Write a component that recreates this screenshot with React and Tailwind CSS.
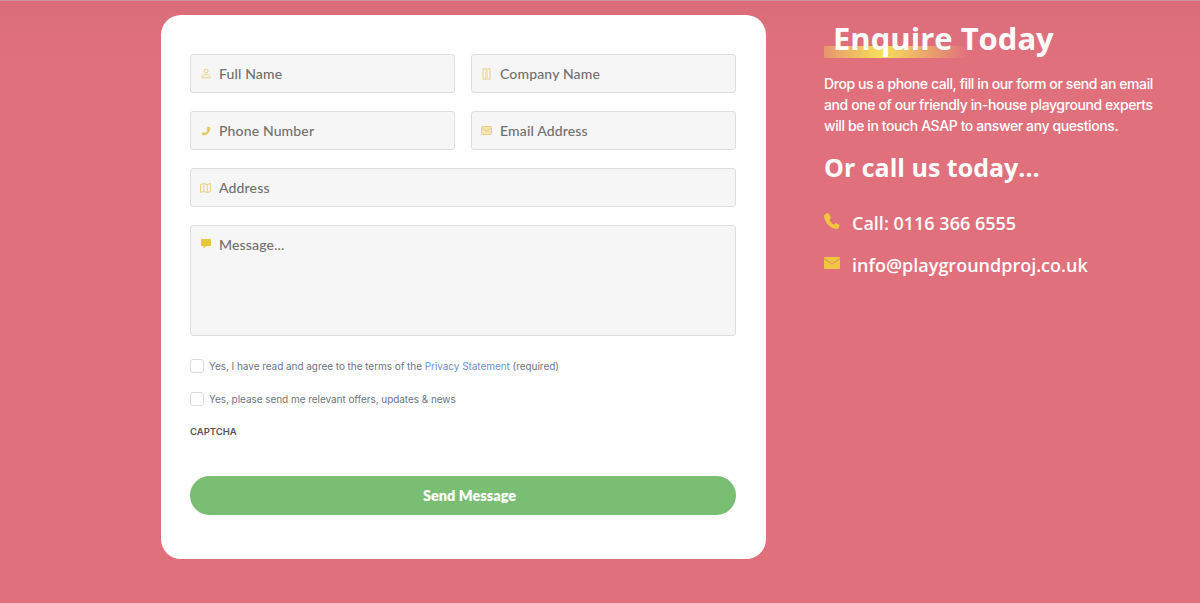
import React from 'react';

const UserIcon = () => (
  <svg width="10" height="11" viewBox="0 0 10 11" fill="none" stroke="#e8cf85" strokeWidth="1">
    <circle cx="5" cy="3" r="2" />
    <path d="M1 9.2c0-1.500 1.200-2.400 2.400-2.400h3.200c1.200 0 2.400.9 2.400 2.400v.6H1z" />
  </svg>
);

const BuildingIcon = () => (
  <svg width="9" height="12" viewBox="0 0 9 12" fill="none" stroke="#e8cf85" strokeWidth="1">
    <rect x="1" y="1" width="7" height="10" />
    <path d="M3 3h3M3 5h3M3 7h3M3 9h3" />
  </svg>
);

const PhoneSolid = ({ size, color, className }) => (
  <svg width={size} height={size} viewBox="0 0 16 16" fill={color} className={className}>
    <path d="M12.600 1.200l2 1.200c.4.200.5.600.5 1C14.600 9.800 9.600 14.700 3.400 15c-.4 0-.8-.2-1-.6l-1.100-2c-.2-.4-.1-.9.3-1.100l2.400-1.400c.4-.2.8-.1 1 .2l1 1.200c1.900-.9 3.500-2.600 4.400-4.500L9.300 5.700c-.3-.3-.4-.7-.2-1.100l1.400-2.900c.4-.5 1.500-.8 2.100-.5z" />
  </svg>
);

const MailOutline = () => (
  <svg width="11" height="9" viewBox="0 0 11 9" fill="#f3e3b4" stroke="#e8cf85" strokeWidth="1">
    <rect x="0.5" y="0.5" width="10" height="8" rx="1" />
    <path d="M0.500 2l5 3 5-3" fill="none" />
  </svg>
);

const MailSolid = () => (
  <svg width="16" height="12" viewBox="0 0 16 12" className="-translate-y-[2px]">
    <rect width="16" height="12" rx="1" fill="#efc63f" />
    <path d="M0 1.500l8 5.500 8-5.500" fill="none" stroke="#e1707d" strokeWidth="0.8" />
  </svg>
);

const MapIcon = () => (
  <svg width="11" height="10" viewBox="0 0 11 10" fill="none" stroke="#e8cf85" strokeWidth="1">
    <path d="M0.500 1.500l3.300-1 3.400 1 3.300-1v8l-3.300 1-3.400-1-3.300 1zM3.800.5v8M7.200 1.500v8" />
  </svg>
);

const ChatIcon = () => (
  <svg width="10" height="10" viewBox="0 0 10 10" fill="#e6c63c">
    <path d="M1 0h8c.6 0 1 .4 1 1v5c0 .6-.4 1-1 1H5L2.500 9.500V7H1c-.6 0-1-.4-1-1V1c0-.6.4-1 1-1z" />
  </svg>
);

const Field = ({ icon, label, iconBox = '', className = 'h-[39px] items-center' }) => (
  <div className={`flex flex-1 rounded-[3px] border border-[#dedede] bg-[#f6f6f6] pl-[9px] ${className}`}>
    <span className={`flex w-[11px] justify-center ${iconBox}`}>{icon}</span>
    <span className="ml-[8px] text-[14px] font-medium tracking-[0.15px] text-[#707070]">{label}</span>
  </div>
);

const CheckRow = ({ children, className }) => (
  <div className={`flex items-start ${className}`}>
    <span className="h-[14px] w-[14px] rounded-[3px] border border-[#dcdcdc] bg-white" />
    <span className="ml-[5px] text-[10px] leading-[14px] tracking-[-0.05px] text-[#6b7585]">{children}</span>
  </div>
);

export default function App() {
  return (
    <div className="flex h-[603px] w-[1200px] overflow-hidden border-t border-[#c9959c] bg-gradient-to-b from-[#da6c7a] via-[#e1707d] via-[10%] to-[#e1707d] pl-[161px] pt-[14px] [font-family:'Open_Sans',sans-serif]">
      {/* form card */}
      <div className="h-[544px] w-[605px] rounded-[20px] bg-white pl-[29px] pr-[30px] pt-[39px] [font-family:'Lato',sans-serif]">
        <div className="flex gap-[16px]">
          <Field icon={<UserIcon />} label="Full Name" />
          <Field icon={<BuildingIcon />} label="Company Name" />
        </div>
        <div className="mt-[18px] flex gap-[16px]">
          <Field icon={<PhoneSolid size={10} color="#e4c95e" />} label="Phone Number" />
          <Field icon={<MailOutline />} label="Email Address" />
        </div>
        <div className="mt-[18px] flex">
          <Field icon={<MapIcon />} label="Address" />
        </div>
        <div className="mt-[18px] flex">
          <Field
            icon={<ChatIcon />}
            label="Message..."
            iconBox="pt-[13px]"
            className="h-[111px] items-start [&>span:last-child]:mt-[8px]"
          />
        </div>

        <div className="[font-family:'Inter',sans-serif]">
          <CheckRow className="mt-[23px]">
            Yes, I have read and agree to the terms of the <span className="text-[#6f8fd6]">Privacy Statement</span> (required)
          </CheckRow>
          <CheckRow className="mt-[19px]">Yes, please send me relevant offers, updates &amp; news</CheckRow>
          <div className="mt-[19px] text-[9.500px] font-semibold leading-[14px] text-[#555]">CAPTCHA</div>
        </div>

        <button className="mt-[37px] h-[39px] w-full rounded-full bg-[#7abe74] pl-[13px] text-[14.500px] font-extrabold text-white">
          Send Message
        </button>
      </div>

      {/* contact info */}
      <div className="ml-[58px] w-[340px] text-white">
        <div className="relative mt-[3px] h-[40px]">
          <div className="absolute left-0 top-[28px] h-[12px] w-[144px] bg-[linear-gradient(90deg,#e8956f,#f5e05a_40%,#e1707d)]" />
          <h1 className="relative ml-[9px] text-[31px] font-bold leading-[40px]">Enquire Today</h1>
        </div>
        <p className="mt-[15px] text-[14px] font-medium leading-[21px] tracking-[-0.4px] [font-family:'Inter',sans-serif]">
          Drop us a phone call, fill in our form or send an email and one of our friendly in-house playground experts will be in touch ASAP to answer any questions.
        </p>
        <h2 className="mt-[13px] text-[25px] font-bold leading-[36px]">Or call us today...</h2>
        <div className="mt-[25px] flex items-center gap-[11px] text-[18px] font-semibold leading-[26px]">
          <PhoneSolid size={18} color="#efc63f" className="-ml-[1px] -translate-y-[2px] -scale-x-100" />
          Call: 0116 366 6555
        </div>
        <div className="mt-[16px] flex items-center gap-[12px] text-[18px] font-semibold leading-[26px]">
          <MailSolid />
          info@playgroundproj.co.uk
        </div>
      </div>
    </div>
  );
}
